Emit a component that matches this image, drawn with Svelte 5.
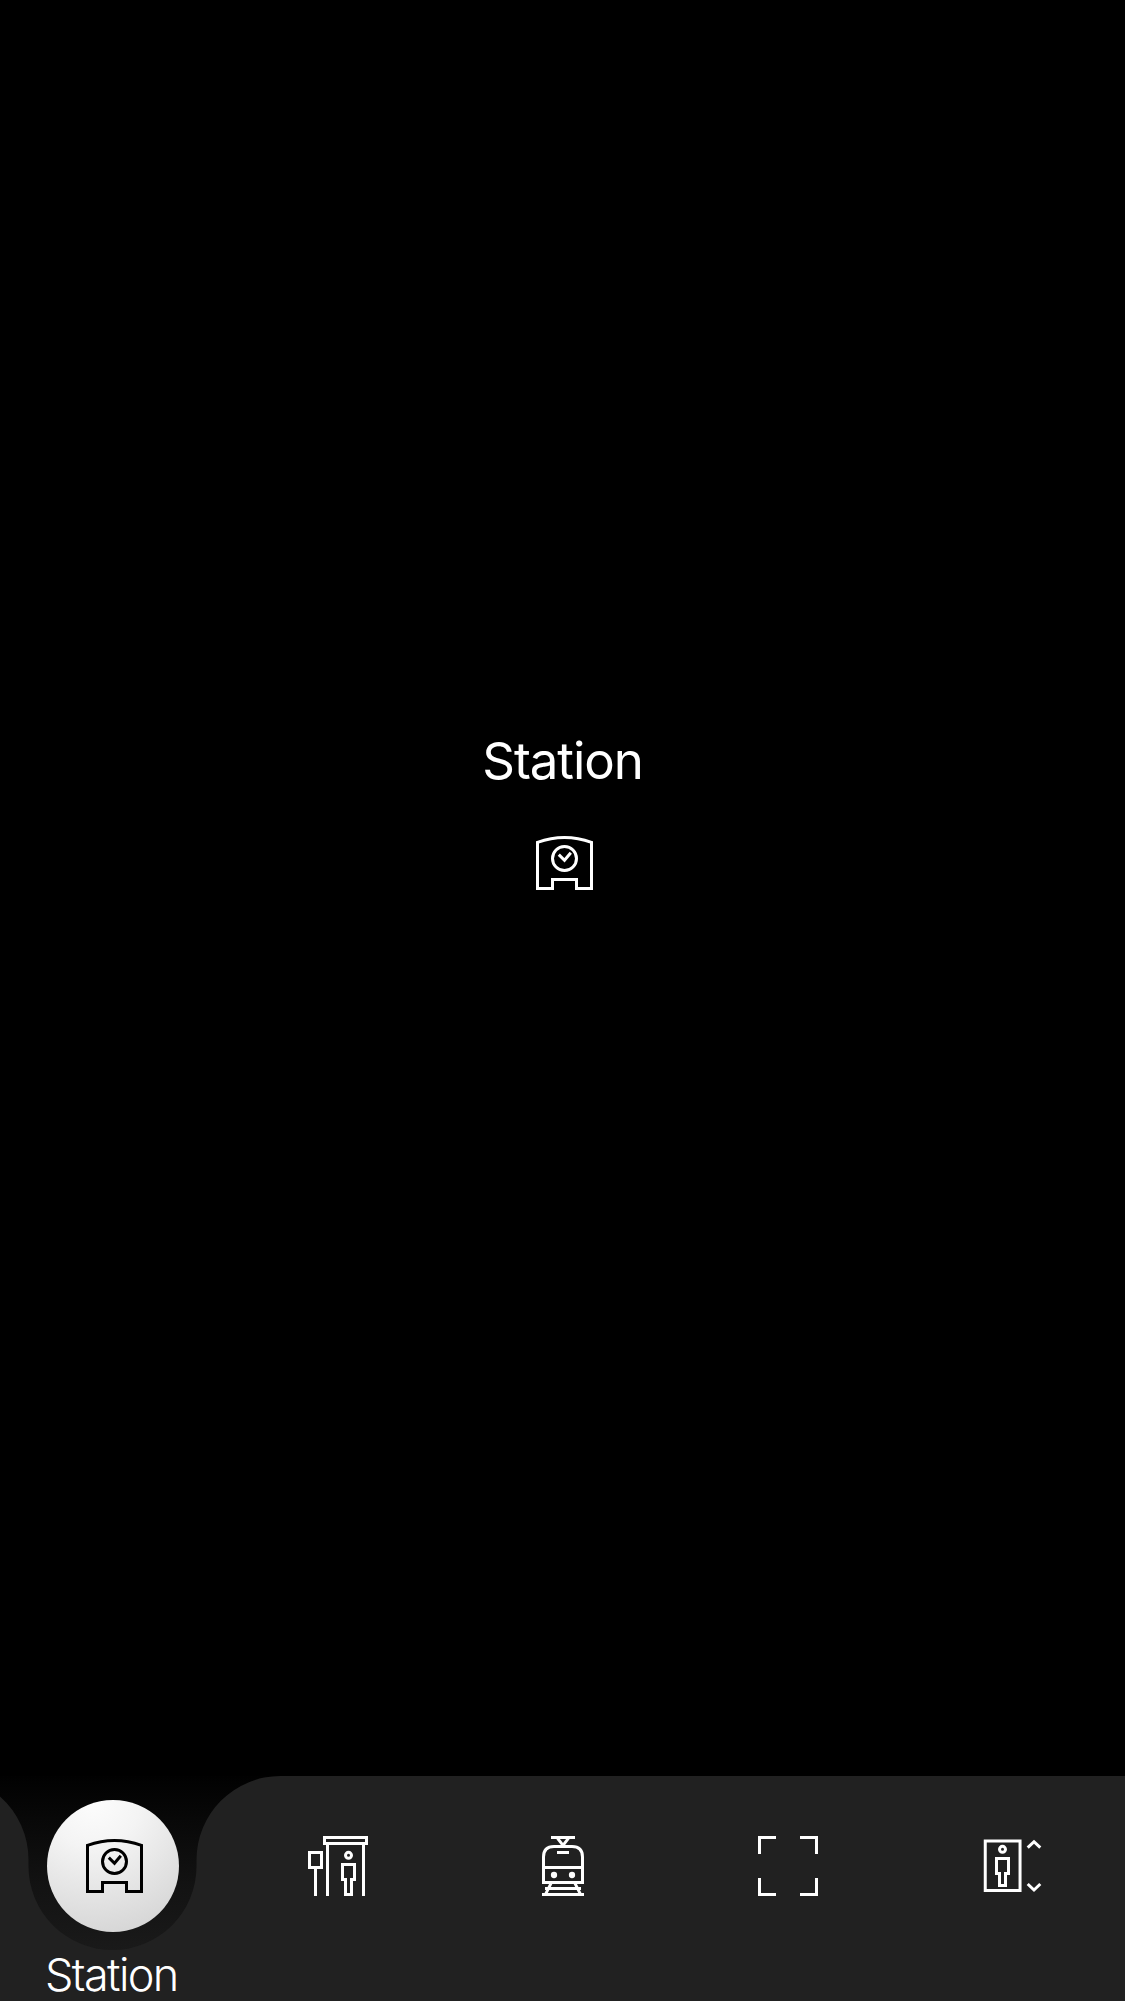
<script>
  const tabs = ['station', 'shelter', 'tram', 'scan', 'lift'];
  let active = $state('station');
</script>

{#snippet icon(name)}
  <svg class="icon" viewBox="0 0 36 36" aria-hidden="true">
    {#if name === 'station'}
      <path d="M9.5 11.1Q18.5 7.9 27.5 11.1V26.5H22.5V23.5H14.5V26.5H9.5Z" />
      <circle cx="18.5" cy="16.5" r="4" />
      <path d="M16.6 15.2L18.5 17.1L20.6 14.6" />
    {:else if name === 'shelter'}
      <path d="M13.5 8.5H27.5V10.5H13.5ZM14.5 11V28M26.5 11V28" />
      <path d="M8.5 13.5H12.5V18.5H8.5ZM10.5 19V28" />
      <circle cx="21.5" cy="14.45" r="1" />
      <path d="M19.5 17.5H23.5V22.5H22.5V27.5H20.5V22.5H19.5Z" />
    {:else if name === 'tram'}
      <path d="M14 8.5H22M16.2 8.8L18 11.1L19.8 8.8" />
      <path d="M11.5 23.5V15Q11.5 11.5 15 11.5H21Q24.5 11.5 24.5 15V23.5ZM11.5 18.5H24.5M16 13.5H20" />
      <path d="M12 25.5H24M11 27.5H25M14 23.8L12.2 27.4M22 23.8L23.8 27.4" />
      <circle class="solid" cx="15" cy="21" r="1.05" />
      <circle class="solid" cx="21" cy="21" r="1.05" />
    {:else if name === 'scan'}
      <path d="M8.5 14V8.5H14M22 8.5H27.5V14M27.5 22V27.5H22M14 27.5H8.5V22" />
    {:else}
      <path d="M8.75 9.65H20.35V26.15H8.75Z" />
      <circle cx="14.5" cy="12.45" r="1" />
      <path d="M12.5 15.5H16.5V20.5H15.5V24.5H13.5V20.5H12.5Z" />
      <path d="M22.9 11.9L25 9.9L27.1 11.9M22.9 24L25 26L27.1 24" />
    {/if}
  </svg>
{/snippet}

<div class="screen">
  <main>
    <h1>Station</h1>
    {@render icon('station')}
  </main>

  <nav>
    <svg class="shape" viewBox="0 0 1125 225" aria-hidden="true">
      <defs>
        <linearGradient id="well" x1="0" y1="0" x2="0" y2="1">
          <stop offset="0" stop-color="#010101" />
          <stop offset="0.6" stop-color="#121212" />
          <stop offset="1" stop-color="#1a1a1a" />
        </linearGradient>
      </defs>
      <rect width="280" height="176" fill="url(#well)" />
      <path
        fill="#212121"
        d="M0 20.5A84 84 0 0 1 28.5 84V90A84 84 0 0 0 196.5 90V84A84 84 0 0 1 280.5 0H1125V225H0Z"
      />
    </svg>
    {#each tabs as tab}
      <button class:active={active === tab} aria-label={tab} onclick={() => (active = tab)}>
        <span class="disc">{@render icon(tab)}</span>
        {#if active === tab}<span class="label">Station</span>{/if}
      </button>
    {/each}
  </nav>
</div>

<style>
  :global(body) {
    margin: 0;
    background: #000;
  }
  .screen {
    display: flex;
    flex-direction: column;
    width: 1125px;
    height: 2001px;
    overflow: hidden;
    background: #000;
    color: #fff;
    font-family: Inter, 'Liberation Sans', sans-serif;
  }
  main {
    flex: 1;
    display: flex;
    flex-direction: column;
    align-items: center;
    padding-top: 731px;
    box-sizing: border-box;
  }
  h1 {
    margin: 0 0 18px;
    height: 60px;
    line-height: 60px;
    font-size: 51px;
    font-weight: 400;
    letter-spacing: -1.1px;
  }
  main .icon {
    margin-left: 1px;
  }
  .icon {
    display: block;
    width: 108px;
    height: 108px;
    flex: none;
    fill: none;
    stroke: currentColor;
    stroke-width: 1;
  }
  .solid {
    fill: currentColor;
    stroke: none;
  }
  nav {
    position: relative;
    display: flex;
    height: 225px;
    flex: none;
  }
  .shape {
    position: absolute;
    inset: 0;
    width: 1125px;
    height: 225px;
  }
  button {
    position: relative;
    display: flex;
    flex-direction: column;
    width: 225px;
    height: 225px;
    padding: 24px 0 0 47px;
    border: 0;
    background: none;
    color: #fff;
    font: inherit;
  }
  .disc {
    display: flex;
    align-items: center;
    justify-content: center;
    width: 132px;
    height: 132px;
    border-radius: 50%;
    flex: none;
  }
  .active .disc {
    background: radial-gradient(circle at 35% 0%, #fdfdfd 0%, #f4f4f4 30%, #cfcfcf 100%);
    color: #000;
  }
  .label {
    width: 134px;
    margin: 19px 0 0 -2px;
    line-height: 48px;
    font-size: 45px;
    font-weight: 300;
    letter-spacing: -1.6px;
    white-space: nowrap;
    text-align: left;
  }
</style>
